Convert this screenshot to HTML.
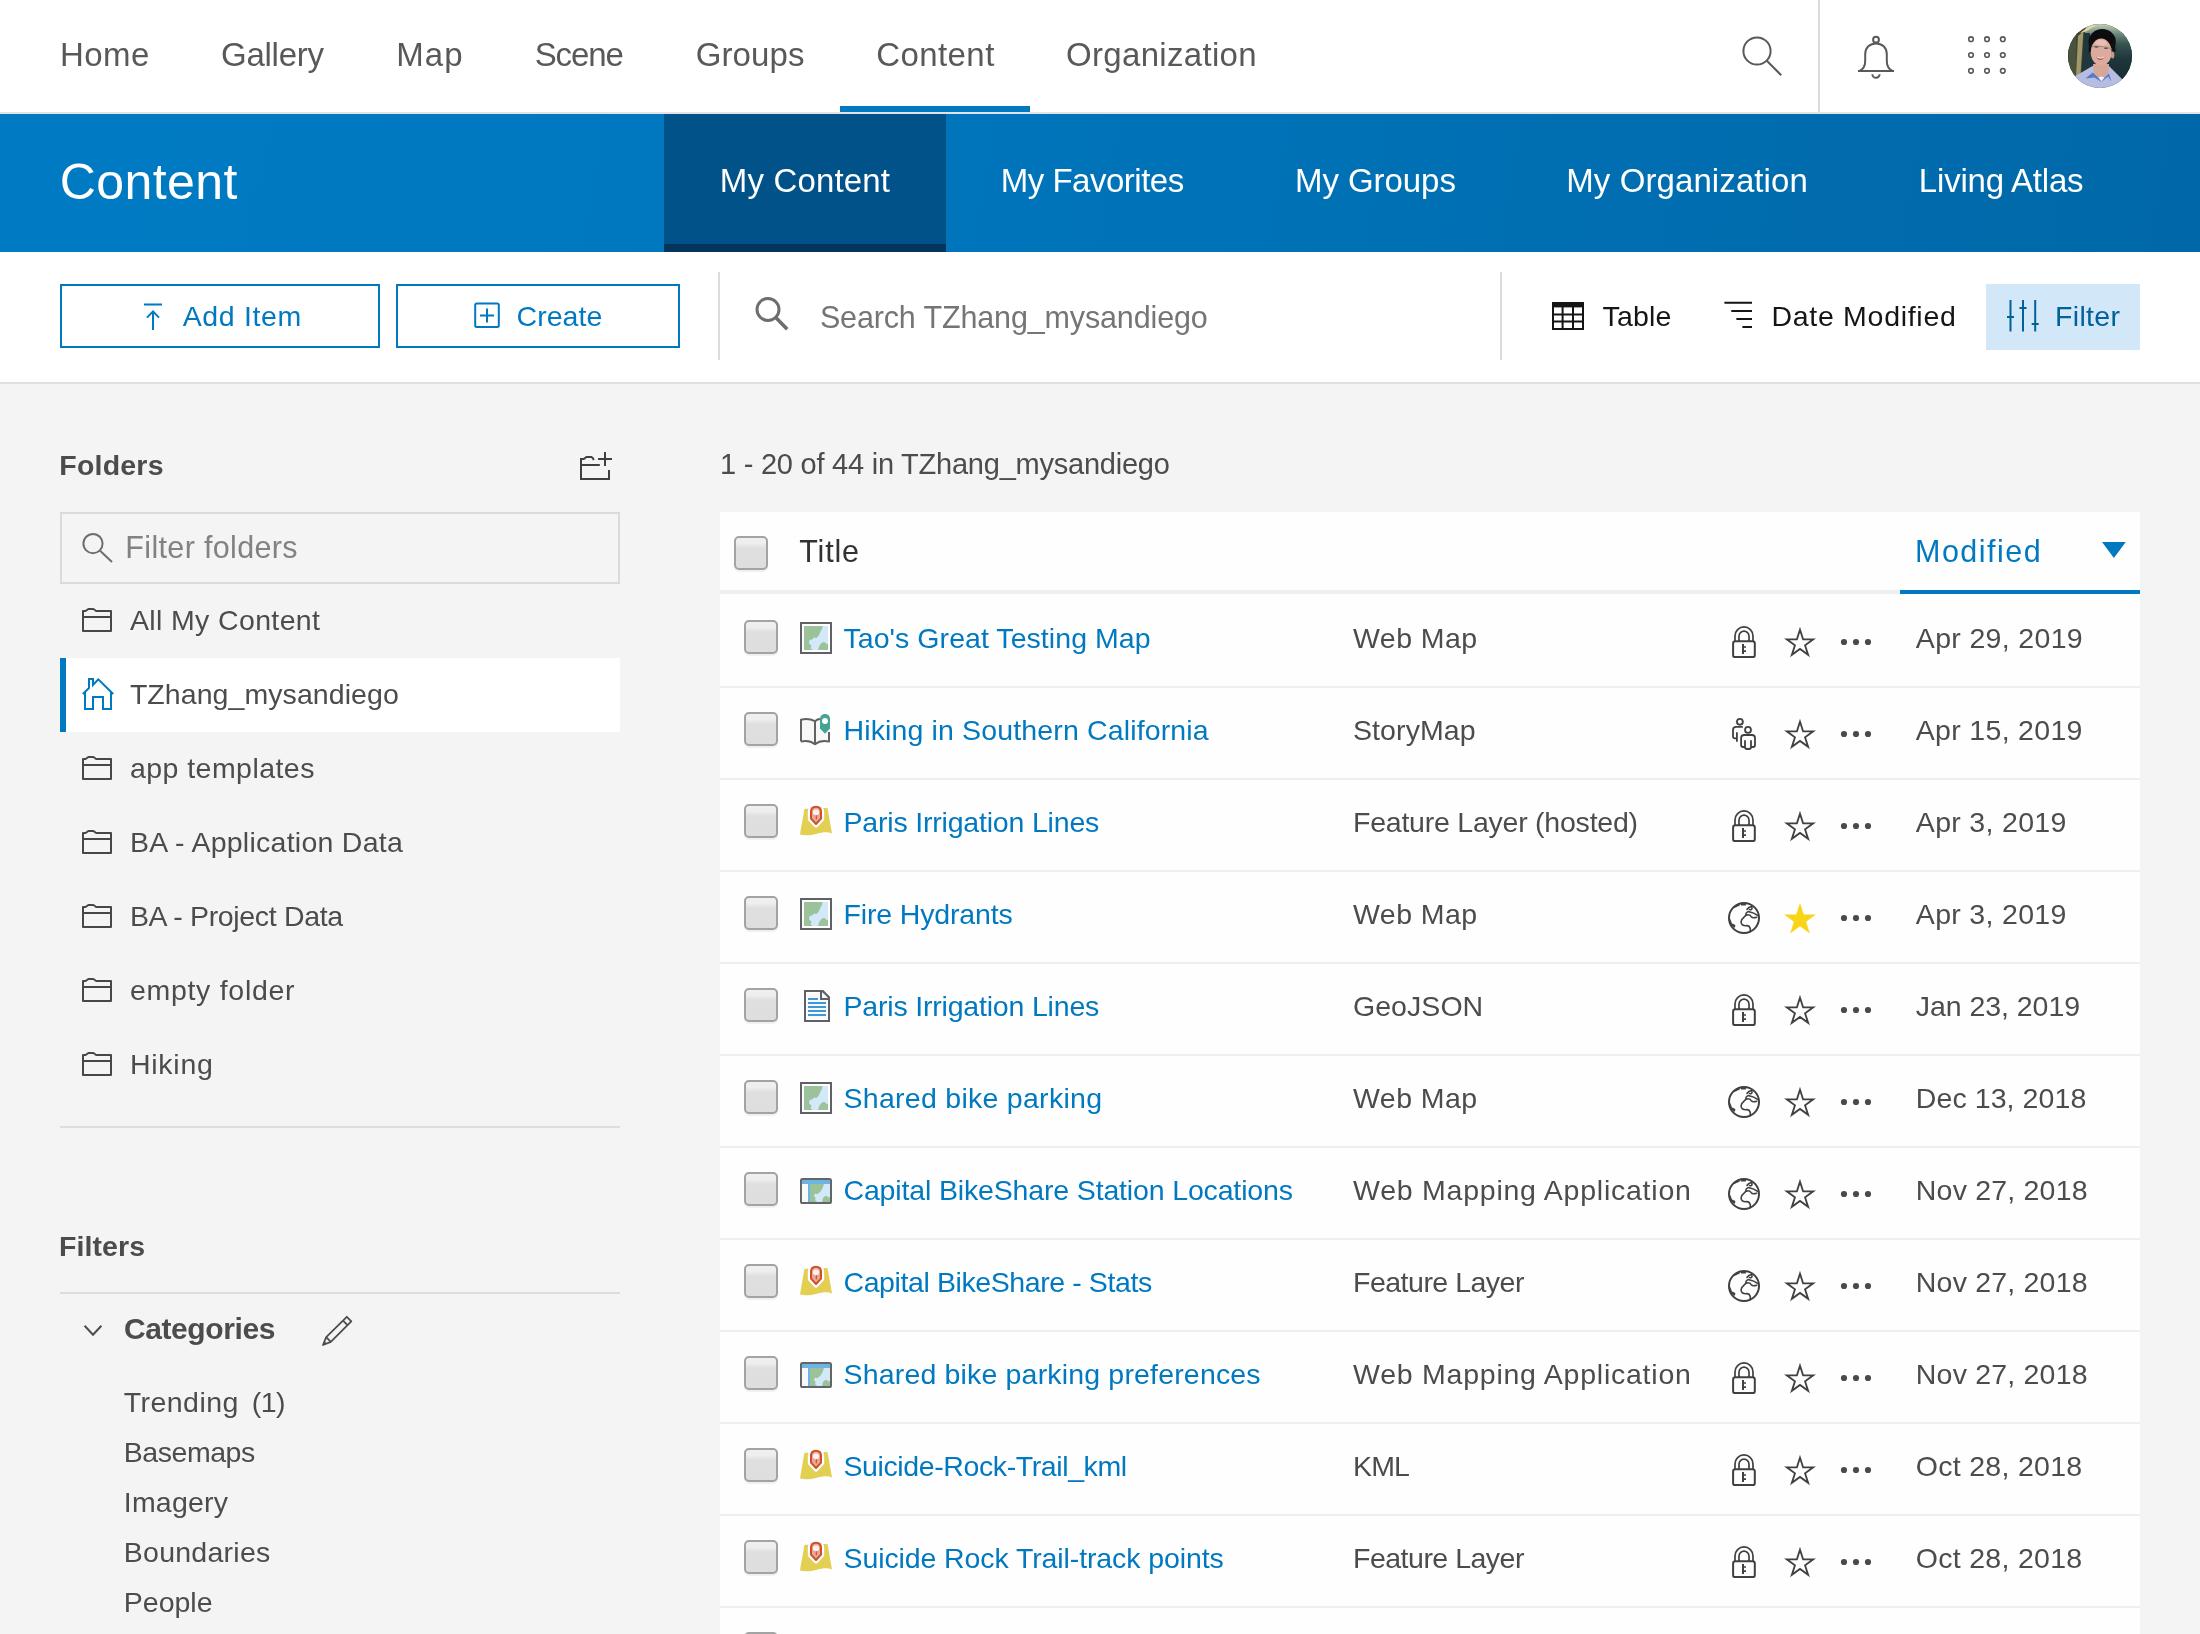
<!DOCTYPE html>
<html><head><meta charset="utf-8"><title>Content</title>
<style>
html,body{margin:0;padding:0}
html{width:2200px;height:1634px;overflow:hidden}
body{width:2200px;height:1634px;position:relative;overflow:hidden;background:#f4f4f4;font-family:"Liberation Sans",sans-serif}
.t{position:absolute;line-height:1;white-space:pre;font-family:"Liberation Sans",sans-serif}
.pg{position:absolute;left:0;top:0;width:2200px;height:1634px;overflow:hidden}
.a{position:absolute}
.tx{position:absolute;left:0;top:0;width:2200px;height:1634px;will-change:transform}
svg{position:absolute;overflow:visible}
.cb{position:absolute;width:30px;height:30px;border:2px solid #a3a3a3;border-radius:5px;background:linear-gradient(#f0f0f0 0,#eeeeee 18%,#dfdfdf 34%,#dedede 100%);box-shadow:0 2px 1px rgba(0,0,0,.06)}
</style></head>
<body>
<div class="pg">
<div class="a" style="left:0;top:0;width:2200px;height:112px;background:#fff"></div>
<div class="a" style="left:0;top:112px;width:2200px;height:2px;background:#e3e3e3"></div>
<div class="a" style="left:840px;top:106px;width:190px;height:6px;background:#0079c1"></div>
<div class="a" style="left:1818px;top:0;width:2px;height:112px;background:#dcdcdc"></div>
<div class="a" style="left:0;top:114px;width:2200px;height:138px;background:linear-gradient(100deg,#007ac2 0%,#0079c1 25%,#0068a8 100%)"></div>
<div class="a" style="left:664px;top:114px;width:282px;height:130px;background:#02528a"></div>
<div class="a" style="left:664px;top:244px;width:282px;height:8px;background:#03355c"></div>
<div class="a" style="left:0;top:252px;width:2200px;height:130px;background:#fff"></div>
<div class="a" style="left:0;top:382px;width:2200px;height:2px;background:#e0e0e0"></div>
<div class="a" style="left:60px;top:284px;width:316px;height:60px;border:2px solid #0079c1;background:#fff"></div>
<div class="a" style="left:396px;top:284px;width:280px;height:60px;border:2px solid #0079c1;background:#fff"></div>
<div class="a" style="left:718px;top:272px;width:2px;height:88px;background:#dcdcdc"></div>
<div class="a" style="left:1500px;top:272px;width:2px;height:88px;background:#dcdcdc"></div>
<div class="a" style="left:1986px;top:284px;width:154px;height:66px;background:#d2e7f8"></div>
<div class="a" style="left:60px;top:512px;width:556px;height:68px;border:2px solid #dadada;background:#f4f4f4"></div>
<div class="a" style="left:60px;top:658px;width:560px;height:74px;background:#fff"></div>
<div class="a" style="left:60px;top:658px;width:6px;height:74px;background:#0079c1"></div>
<div class="a" style="left:60px;top:1126px;width:560px;height:2px;background:#dddddd"></div>
<div class="a" style="left:60px;top:1292px;width:560px;height:2px;background:#dddddd"></div>
<div class="a" style="left:720px;top:512px;width:1420px;height:1122px;background:#fefefe"></div>
<div class="a" style="left:720px;top:590px;width:1420px;height:4px;background:#efefef"></div>
<div class="a" style="left:1900px;top:590px;width:240px;height:4px;background:#0079c1"></div>
<div class="a" style="left:720px;top:686px;width:1420px;height:2px;background:#efefef"></div>
<div class="a" style="left:720px;top:778px;width:1420px;height:2px;background:#efefef"></div>
<div class="a" style="left:720px;top:870px;width:1420px;height:2px;background:#efefef"></div>
<div class="a" style="left:720px;top:962px;width:1420px;height:2px;background:#efefef"></div>
<div class="a" style="left:720px;top:1054px;width:1420px;height:2px;background:#efefef"></div>
<div class="a" style="left:720px;top:1146px;width:1420px;height:2px;background:#efefef"></div>
<div class="a" style="left:720px;top:1238px;width:1420px;height:2px;background:#efefef"></div>
<div class="a" style="left:720px;top:1330px;width:1420px;height:2px;background:#efefef"></div>
<div class="a" style="left:720px;top:1422px;width:1420px;height:2px;background:#efefef"></div>
<div class="a" style="left:720px;top:1514px;width:1420px;height:2px;background:#efefef"></div>
<div class="a" style="left:720px;top:1606px;width:1420px;height:2px;background:#efefef"></div>
<div class="cb" style="left:734px;top:536px"></div>
<div class="cb" style="left:744px;top:620px"></div>
<div class="cb" style="left:744px;top:712px"></div>
<div class="cb" style="left:744px;top:804px"></div>
<div class="cb" style="left:744px;top:896px"></div>
<div class="cb" style="left:744px;top:988px"></div>
<div class="cb" style="left:744px;top:1080px"></div>
<div class="cb" style="left:744px;top:1172px"></div>
<div class="cb" style="left:744px;top:1264px"></div>
<div class="cb" style="left:744px;top:1356px"></div>
<div class="cb" style="left:744px;top:1448px"></div>
<div class="cb" style="left:744px;top:1540px"></div>
<div class="cb" style="left:744px;top:1632px"></div>
<svg class="a" style="left:0;top:0" width="2200" height="1634" viewBox="0 0 2200 1634">
<defs>
</defs>
<g fill="none" stroke="#595959" stroke-width="2"><circle cx="1757" cy="51" r="13.6"/><path d="M1766.8,60.8L1781.2,75.2"/></g>
<g fill="none" stroke="#595959" stroke-width="2"><circle cx="1876" cy="39.7" r="2.9"/><path d="M1859.5,71C1863.5,69 1865.2,66 1865.2,61V54C1865.2,47.6 1870,43.4 1876,43.4 1882,43.4 1886.8,47.6 1886.8,54V61C1886.8,66 1888.5,69 1892.5,71"/><path d="M1858,71H1894"/><path d="M1872.4,74.2A3.6,3.6 0 0 0 1879.6,74.2"/></g>
<g fill="none" stroke="#595959" stroke-width="1.6"><circle cx="1971" cy="39.2" r="2.3"/><circle cx="1987" cy="39.2" r="2.3"/><circle cx="2002.8" cy="39.2" r="2.3"/><circle cx="1971" cy="55" r="2.3"/><circle cx="1987" cy="55" r="2.3"/><circle cx="2002.8" cy="55" r="2.3"/><circle cx="1971" cy="70.8" r="2.3"/><circle cx="1987" cy="70.8" r="2.3"/><circle cx="2002.8" cy="70.8" r="2.3"/></g>
<g fill="none" stroke="#0079c1" stroke-width="2"><path d="M144,304.5H162M153,311.6V330M147,317.6L153,311.4 159,317.6"/><rect x="475.2" y="303.4" width="23.6" height="23.6" rx="1.5"/><path d="M487,308.4V322.4M480,315.4H494"/></g>
<g fill="none" stroke="#6e6e6e"><circle cx="768" cy="309.5" r="11" stroke-width="3"/><path d="M775.8,317.6L787.2,329.2" stroke-width="3.6"/></g>
<g fill="none" stroke="#151515" stroke-width="2"><rect x="1553" y="303" width="30" height="26"/><path d="M1553,314.5H1583M1553,321.6H1583M1562.6,307V329M1573,307V329"/></g><rect x="1552" y="302" width="32" height="5.4" fill="#151515"/>
<path d="M1724.4,302.8H1752M1731.3,311H1752M1736.4,319H1752M1742.4,327H1752" fill="none" stroke="#151515" stroke-width="2"/>
<path d="M2010.5,300V331.6M2023,300V331.6M2035.2,300V331.6M2007,317H2014M2019.5,308H2026.5M2031.7,324H2038.7" fill="none" stroke="#00619b" stroke-width="2"/>
<path d="M593.6,460.2Q593.4,457.6 591.4,457H586.4L583.8,459H581V479H609V470M581,465H599.8M605,452V466M598,459H612" fill="none" stroke="#404040" stroke-width="2"/>
<g fill="none" stroke="#6e6e6e" stroke-width="2"><circle cx="93" cy="543.6" r="9.6"/><path d="M99.8,550.6L112,562"/></g>
<g transform="translate(82,608)"><path d="M1,3H3.6L6.4,1H11.4L14.2,3H29V23H1ZM1,9H29" fill="none" stroke="#474747" stroke-width="2" stroke-linejoin="round"/></g>
<g transform="translate(82,756)"><path d="M1,3H3.6L6.4,1H11.4L14.2,3H29V23H1ZM1,9H29" fill="none" stroke="#474747" stroke-width="2" stroke-linejoin="round"/></g>
<g transform="translate(82,830)"><path d="M1,3H3.6L6.4,1H11.4L14.2,3H29V23H1ZM1,9H29" fill="none" stroke="#474747" stroke-width="2" stroke-linejoin="round"/></g>
<g transform="translate(82,904)"><path d="M1,3H3.6L6.4,1H11.4L14.2,3H29V23H1ZM1,9H29" fill="none" stroke="#474747" stroke-width="2" stroke-linejoin="round"/></g>
<g transform="translate(82,978)"><path d="M1,3H3.6L6.4,1H11.4L14.2,3H29V23H1ZM1,9H29" fill="none" stroke="#474747" stroke-width="2" stroke-linejoin="round"/></g>
<g transform="translate(82,1052)"><path d="M1,3H3.6L6.4,1H11.4L14.2,3H29V23H1ZM1,9H29" fill="none" stroke="#474747" stroke-width="2" stroke-linejoin="round"/></g>
<path d="M85,692.5V709H93V697H103V709H111V692.5M82.8,694L89,688V679H93V685L98.3,679.4 113.2,694" fill="none" stroke="#0079c1" stroke-width="2"/>
<path d="M84.6,1325.8L93,1334.8 101.4,1325.8" fill="none" stroke="#4c4c4c" stroke-width="2"/>
<g fill="none" stroke="#4c4c4c" stroke-width="1.8" stroke-linejoin="round"><path d="M326.2,1337.2L346.8,1316.8 351.3,1321.3 330.8,1341.8 323,1345ZM343,1320.6L347.5,1325.1M326.2,1337.2L330.8,1341.8"/></g><path d="M323,1345L324.6,1341.2 326.8,1343.4Z" fill="#4c4c4c"/>
<path d="M2102,542H2125.8L2113.9,558Z" fill="#0079c1"/>
<g transform="translate(800,622)"><rect x="1" y="1" width="30" height="30" fill="#fff" stroke="#5f6166" stroke-width="2"/><rect x="4" y="4" width="24" height="24" fill="#9bc29a"/><path d="M22.5,4H28V21.5L26.5,22 24.5,20 22,20.5 19.5,23.5 18,28H13L10.5,26.5 11.5,23.5 9,21.5 9.5,18 12,17.5 14,15.5 16.5,16 19,13 20.5,9.5 22,7Z" fill="#d3e8f8"/></g>
<g transform="translate(1732,626)"><g fill="none" stroke="#404040"><rect x="1.1" y="15.3" width="21.7" height="15.8" rx="2.2" stroke-width="2"/><path d="M3,15V9.9A9,9 0 0 1 21,9.9V15M7,15V10.2A5,5 0 0 1 17,10.2V15" stroke-width="1.7"/><path d="M11,18V28" stroke-width="2"/><path d="M11,21H14M11,25.2H14" stroke-width="1.7"/></g></g>
<polygon points="1800.00,629.70 1803.12,639.30 1813.22,639.30 1805.05,645.24 1808.17,654.85 1800.00,648.91 1791.83,654.85 1794.95,645.24 1786.78,639.30 1796.88,639.30" fill="none" stroke="#404040" stroke-width="1.8"/>
<g fill="#4a4a4a"><circle cx="1844" cy="642" r="3.1"/><circle cx="1856" cy="642" r="3.1"/><circle cx="1868" cy="642" r="3.1"/></g>
<g transform="translate(800,714)"><path d="M1,5.8Q8,3.6 15,7.2Q18,4.5 22,5V12H29V27.6Q21,25.6 15,30.2Q9,25.6 1,27.6Z" fill="#f7f7f7"/><path d="M15,7.2V30M1,27.6V5.8Q8,3.6 15,7.2Q17.5,5 20,5M29,18V27.6Q21,25.6 15,30.2Q9,25.6 1,27.6" fill="none" stroke="#616161" stroke-width="2" stroke-linejoin="round"/><path d="M25,0C28,0 30,2.2 30,5V14.6L25,19.8 20,14.6V5C20,2.2 22,0 25,0Z" fill="#45a393"/><circle cx="25" cy="7" r="3" fill="#fff"/></g>
<g transform="translate(1732,718)"><g fill="none" stroke="#404040" stroke-width="1.8"><circle cx="7.9" cy="3.8" r="2.95"/><path d="M10.8,8.9H4.2A3.2,3.2 0 0 0 1,12.1V18.4A1.9,1.9 0 0 0 2.9,20.3H4.9M4.9,14.3V23.7"/><circle cx="16" cy="11.9" r="2.95"/><path d="M13,29H11.1A2,2 0 0 1 9.1,27V20A3,3 0 0 1 12.1,17H20A3,3 0 0 1 23,20V27A2,2 0 0 1 21,29H19M13,22.3V29A2,2 0 0 0 15,31H17A2,2 0 0 0 19,29V22.3"/></g></g>
<polygon points="1800.00,721.70 1803.12,731.30 1813.22,731.30 1805.05,737.24 1808.17,746.85 1800.00,740.91 1791.83,746.85 1794.95,737.24 1786.78,731.30 1796.88,731.30" fill="none" stroke="#404040" stroke-width="1.8"/>
<g fill="#4a4a4a"><circle cx="1844" cy="734" r="3.1"/><circle cx="1856" cy="734" r="3.1"/><circle cx="1868" cy="734" r="3.1"/></g>
<g transform="translate(800,805.8)"><path d="M4.4,3.2C8,2.4 12,3.4 16,3 20,2.6 24,1.8 27.6,2.4L32,27.6C28,25.8 22,26.6 16,28.2 10,29.8 4,30 0,28.4Z" fill="#e3cf52"/><path d="M16,0C19.5,0 22,2.5 22,6V13.2L16,19.6 10,13.2V6C10,2.5 12.5,0 16,0Z" fill="#fff" stroke="#fff" stroke-width="4.4" stroke-linejoin="round"/><path d="M16,1C19,1 21,3 21,6V12.8L16,18.2 11,12.8V6C11,3 13,1 16,1Z" fill="#eaa898" stroke="#cf4f27" stroke-width="2" stroke-linejoin="round"/><path d="M16.4,8V13.5" stroke="#cf5a35" stroke-width="1.4"/><circle cx="16" cy="6.4" r="3" fill="#fbf3f0"/></g>
<g transform="translate(1732,810)"><g fill="none" stroke="#404040"><rect x="1.1" y="15.3" width="21.7" height="15.8" rx="2.2" stroke-width="2"/><path d="M3,15V9.9A9,9 0 0 1 21,9.9V15M7,15V10.2A5,5 0 0 1 17,10.2V15" stroke-width="1.7"/><path d="M11,18V28" stroke-width="2"/><path d="M11,21H14M11,25.2H14" stroke-width="1.7"/></g></g>
<polygon points="1800.00,813.70 1803.12,823.30 1813.22,823.30 1805.05,829.24 1808.17,838.85 1800.00,832.91 1791.83,838.85 1794.95,829.24 1786.78,823.30 1796.88,823.30" fill="none" stroke="#404040" stroke-width="1.8"/>
<g fill="#4a4a4a"><circle cx="1844" cy="826" r="3.1"/><circle cx="1856" cy="826" r="3.1"/><circle cx="1868" cy="826" r="3.1"/></g>
<g transform="translate(800,898)"><rect x="1" y="1" width="30" height="30" fill="#fff" stroke="#5f6166" stroke-width="2"/><rect x="4" y="4" width="24" height="24" fill="#9bc29a"/><path d="M22.5,4H28V21.5L26.5,22 24.5,20 22,20.5 19.5,23.5 18,28H13L10.5,26.5 11.5,23.5 9,21.5 9.5,18 12,17.5 14,15.5 16.5,16 19,13 20.5,9.5 22,7Z" fill="#d3e8f8"/></g>
<g transform="translate(1728,902)"><g fill="none" stroke="#404040"><circle cx="16" cy="16" r="15" stroke-width="2"/><path d="M20,9.6C18,10.6 17.4,12.4 18.2,13.2 16,14.6 15.4,16.4 13.9,17.2 13.4,18.6 12.6,20 13.4,21.6 14.4,23.4 16.4,24 18.6,23.6 20.8,23.6 22,25 22.4,27.2L22,29.6M20,9.6C22,10.4 24.6,10.4 26.6,11.6L30,13.6M18.4,13.2C20,12.4 22,13 23,14.4 24.2,16 25.6,16.2 28.6,15.2M19,7.4L21,5.4 23.4,4.4M21.6,7.6C23,8 24.4,7 24,5.6M6,5.2L11,3M13.4,2.8H17.4M1.6,17.6L3.4,22 6.4,24.8M4.4,22.6L6.6,23.4" stroke-width="1.6" stroke-linejoin="round" stroke-linecap="round"/></g></g>
<polygon points="1800.00,903.00 1803.77,914.61 1815.98,914.61 1806.10,921.78 1809.87,933.39 1800.00,926.22 1790.13,933.39 1793.90,921.78 1784.02,914.61 1796.23,914.61" fill="#f8d616"/>
<g fill="#4a4a4a"><circle cx="1844" cy="918" r="3.1"/><circle cx="1856" cy="918" r="3.1"/><circle cx="1868" cy="918" r="3.1"/></g>
<g transform="translate(804,990)"><path d="M1,1H18.6L25,7.4V31H1Z" fill="#fefefe" stroke="#5f6166" stroke-width="2" stroke-linejoin="miter"/><rect x="3.5" y="3.5" width="19" height="25" fill="#f8f8f8"/><path d="M17,1.5V9H24.5" fill="none" stroke="#5f6166" stroke-width="2"/><path d="M18.6,1L25,7.4" fill="none" stroke="#5f6166" stroke-width="2"/><g fill="#3f98d6"><rect x="4" y="8" width="10" height="2"/><rect x="4" y="12" width="18" height="2"/><rect x="4" y="16" width="18" height="2"/><rect x="4" y="20" width="18" height="2"/><rect x="4" y="24" width="18" height="2"/></g></g>
<g transform="translate(1732,994)"><g fill="none" stroke="#404040"><rect x="1.1" y="15.3" width="21.7" height="15.8" rx="2.2" stroke-width="2"/><path d="M3,15V9.9A9,9 0 0 1 21,9.9V15M7,15V10.2A5,5 0 0 1 17,10.2V15" stroke-width="1.7"/><path d="M11,18V28" stroke-width="2"/><path d="M11,21H14M11,25.2H14" stroke-width="1.7"/></g></g>
<polygon points="1800.00,997.70 1803.12,1007.30 1813.22,1007.30 1805.05,1013.24 1808.17,1022.85 1800.00,1016.91 1791.83,1022.85 1794.95,1013.24 1786.78,1007.30 1796.88,1007.30" fill="none" stroke="#404040" stroke-width="1.8"/>
<g fill="#4a4a4a"><circle cx="1844" cy="1010" r="3.1"/><circle cx="1856" cy="1010" r="3.1"/><circle cx="1868" cy="1010" r="3.1"/></g>
<g transform="translate(800,1082)"><rect x="1" y="1" width="30" height="30" fill="#fff" stroke="#5f6166" stroke-width="2"/><rect x="4" y="4" width="24" height="24" fill="#9bc29a"/><path d="M22.5,4H28V21.5L26.5,22 24.5,20 22,20.5 19.5,23.5 18,28H13L10.5,26.5 11.5,23.5 9,21.5 9.5,18 12,17.5 14,15.5 16.5,16 19,13 20.5,9.5 22,7Z" fill="#d3e8f8"/></g>
<g transform="translate(1728,1086)"><g fill="none" stroke="#404040"><circle cx="16" cy="16" r="15" stroke-width="2"/><path d="M20,9.6C18,10.6 17.4,12.4 18.2,13.2 16,14.6 15.4,16.4 13.9,17.2 13.4,18.6 12.6,20 13.4,21.6 14.4,23.4 16.4,24 18.6,23.6 20.8,23.6 22,25 22.4,27.2L22,29.6M20,9.6C22,10.4 24.6,10.4 26.6,11.6L30,13.6M18.4,13.2C20,12.4 22,13 23,14.4 24.2,16 25.6,16.2 28.6,15.2M19,7.4L21,5.4 23.4,4.4M21.6,7.6C23,8 24.4,7 24,5.6M6,5.2L11,3M13.4,2.8H17.4M1.6,17.6L3.4,22 6.4,24.8M4.4,22.6L6.6,23.4" stroke-width="1.6" stroke-linejoin="round" stroke-linecap="round"/></g></g>
<polygon points="1800.00,1089.70 1803.12,1099.30 1813.22,1099.30 1805.05,1105.24 1808.17,1114.85 1800.00,1108.91 1791.83,1114.85 1794.95,1105.24 1786.78,1099.30 1796.88,1099.30" fill="none" stroke="#404040" stroke-width="1.8"/>
<g fill="#4a4a4a"><circle cx="1844" cy="1102" r="3.1"/><circle cx="1856" cy="1102" r="3.1"/><circle cx="1868" cy="1102" r="3.1"/></g>
<g transform="translate(800,1178)"><rect x="1" y="1" width="30" height="24" rx="1.6" fill="#fff" stroke="#646567" stroke-width="2"/><rect x="2" y="2" width="28" height="4" fill="#6cb3e6"/><rect x="2" y="6" width="6" height="18" fill="#f9f9f9"/><rect x="8" y="6" width="2" height="18" fill="#6cb3e6"/><rect x="10" y="6" width="20" height="18" fill="#9cc29a"/><path d="M24,6H30V18.8L28.5,19.6 27,18 25,18 23,20 22,24H17L15,22 15.6,20 14,18 15,15.4 17,16.2 19,15 21,13 22.5,10Z" fill="#d3e9f8"/></g>
<g transform="translate(1728,1178)"><g fill="none" stroke="#404040"><circle cx="16" cy="16" r="15" stroke-width="2"/><path d="M20,9.6C18,10.6 17.4,12.4 18.2,13.2 16,14.6 15.4,16.4 13.9,17.2 13.4,18.6 12.6,20 13.4,21.6 14.4,23.4 16.4,24 18.6,23.6 20.8,23.6 22,25 22.4,27.2L22,29.6M20,9.6C22,10.4 24.6,10.4 26.6,11.6L30,13.6M18.4,13.2C20,12.4 22,13 23,14.4 24.2,16 25.6,16.2 28.6,15.2M19,7.4L21,5.4 23.4,4.4M21.6,7.6C23,8 24.4,7 24,5.6M6,5.2L11,3M13.4,2.8H17.4M1.6,17.6L3.4,22 6.4,24.8M4.4,22.6L6.6,23.4" stroke-width="1.6" stroke-linejoin="round" stroke-linecap="round"/></g></g>
<polygon points="1800.00,1181.70 1803.12,1191.30 1813.22,1191.30 1805.05,1197.24 1808.17,1206.85 1800.00,1200.91 1791.83,1206.85 1794.95,1197.24 1786.78,1191.30 1796.88,1191.30" fill="none" stroke="#404040" stroke-width="1.8"/>
<g fill="#4a4a4a"><circle cx="1844" cy="1194" r="3.1"/><circle cx="1856" cy="1194" r="3.1"/><circle cx="1868" cy="1194" r="3.1"/></g>
<g transform="translate(800,1265.8)"><path d="M4.4,3.2C8,2.4 12,3.4 16,3 20,2.6 24,1.8 27.6,2.4L32,27.6C28,25.8 22,26.6 16,28.2 10,29.8 4,30 0,28.4Z" fill="#e3cf52"/><path d="M16,0C19.5,0 22,2.5 22,6V13.2L16,19.6 10,13.2V6C10,2.5 12.5,0 16,0Z" fill="#fff" stroke="#fff" stroke-width="4.4" stroke-linejoin="round"/><path d="M16,1C19,1 21,3 21,6V12.8L16,18.2 11,12.8V6C11,3 13,1 16,1Z" fill="#eaa898" stroke="#cf4f27" stroke-width="2" stroke-linejoin="round"/><path d="M16.4,8V13.5" stroke="#cf5a35" stroke-width="1.4"/><circle cx="16" cy="6.4" r="3" fill="#fbf3f0"/></g>
<g transform="translate(1728,1270)"><g fill="none" stroke="#404040"><circle cx="16" cy="16" r="15" stroke-width="2"/><path d="M20,9.6C18,10.6 17.4,12.4 18.2,13.2 16,14.6 15.4,16.4 13.9,17.2 13.4,18.6 12.6,20 13.4,21.6 14.4,23.4 16.4,24 18.6,23.6 20.8,23.6 22,25 22.4,27.2L22,29.6M20,9.6C22,10.4 24.6,10.4 26.6,11.6L30,13.6M18.4,13.2C20,12.4 22,13 23,14.4 24.2,16 25.6,16.2 28.6,15.2M19,7.4L21,5.4 23.4,4.4M21.6,7.6C23,8 24.4,7 24,5.6M6,5.2L11,3M13.4,2.8H17.4M1.6,17.6L3.4,22 6.4,24.8M4.4,22.6L6.6,23.4" stroke-width="1.6" stroke-linejoin="round" stroke-linecap="round"/></g></g>
<polygon points="1800.00,1273.70 1803.12,1283.30 1813.22,1283.30 1805.05,1289.24 1808.17,1298.85 1800.00,1292.91 1791.83,1298.85 1794.95,1289.24 1786.78,1283.30 1796.88,1283.30" fill="none" stroke="#404040" stroke-width="1.8"/>
<g fill="#4a4a4a"><circle cx="1844" cy="1286" r="3.1"/><circle cx="1856" cy="1286" r="3.1"/><circle cx="1868" cy="1286" r="3.1"/></g>
<g transform="translate(800,1362)"><rect x="1" y="1" width="30" height="24" rx="1.6" fill="#fff" stroke="#646567" stroke-width="2"/><rect x="2" y="2" width="28" height="4" fill="#6cb3e6"/><rect x="2" y="6" width="6" height="18" fill="#f9f9f9"/><rect x="8" y="6" width="2" height="18" fill="#6cb3e6"/><rect x="10" y="6" width="20" height="18" fill="#9cc29a"/><path d="M24,6H30V18.8L28.5,19.6 27,18 25,18 23,20 22,24H17L15,22 15.6,20 14,18 15,15.4 17,16.2 19,15 21,13 22.5,10Z" fill="#d3e9f8"/></g>
<g transform="translate(1732,1362)"><g fill="none" stroke="#404040"><rect x="1.1" y="15.3" width="21.7" height="15.8" rx="2.2" stroke-width="2"/><path d="M3,15V9.9A9,9 0 0 1 21,9.9V15M7,15V10.2A5,5 0 0 1 17,10.2V15" stroke-width="1.7"/><path d="M11,18V28" stroke-width="2"/><path d="M11,21H14M11,25.2H14" stroke-width="1.7"/></g></g>
<polygon points="1800.00,1365.70 1803.12,1375.30 1813.22,1375.30 1805.05,1381.24 1808.17,1390.85 1800.00,1384.91 1791.83,1390.85 1794.95,1381.24 1786.78,1375.30 1796.88,1375.30" fill="none" stroke="#404040" stroke-width="1.8"/>
<g fill="#4a4a4a"><circle cx="1844" cy="1378" r="3.1"/><circle cx="1856" cy="1378" r="3.1"/><circle cx="1868" cy="1378" r="3.1"/></g>
<g transform="translate(800,1449.8)"><path d="M4.4,3.2C8,2.4 12,3.4 16,3 20,2.6 24,1.8 27.6,2.4L32,27.6C28,25.8 22,26.6 16,28.2 10,29.8 4,30 0,28.4Z" fill="#e3cf52"/><path d="M16,0C19.5,0 22,2.5 22,6V13.2L16,19.6 10,13.2V6C10,2.5 12.5,0 16,0Z" fill="#fff" stroke="#fff" stroke-width="4.4" stroke-linejoin="round"/><path d="M16,1C19,1 21,3 21,6V12.8L16,18.2 11,12.8V6C11,3 13,1 16,1Z" fill="#eaa898" stroke="#cf4f27" stroke-width="2" stroke-linejoin="round"/><path d="M16.4,8V13.5" stroke="#cf5a35" stroke-width="1.4"/><circle cx="16" cy="6.4" r="3" fill="#fbf3f0"/></g>
<g transform="translate(1732,1454)"><g fill="none" stroke="#404040"><rect x="1.1" y="15.3" width="21.7" height="15.8" rx="2.2" stroke-width="2"/><path d="M3,15V9.9A9,9 0 0 1 21,9.9V15M7,15V10.2A5,5 0 0 1 17,10.2V15" stroke-width="1.7"/><path d="M11,18V28" stroke-width="2"/><path d="M11,21H14M11,25.2H14" stroke-width="1.7"/></g></g>
<polygon points="1800.00,1457.70 1803.12,1467.30 1813.22,1467.30 1805.05,1473.24 1808.17,1482.85 1800.00,1476.91 1791.83,1482.85 1794.95,1473.24 1786.78,1467.30 1796.88,1467.30" fill="none" stroke="#404040" stroke-width="1.8"/>
<g fill="#4a4a4a"><circle cx="1844" cy="1470" r="3.1"/><circle cx="1856" cy="1470" r="3.1"/><circle cx="1868" cy="1470" r="3.1"/></g>
<g transform="translate(800,1541.8)"><path d="M4.4,3.2C8,2.4 12,3.4 16,3 20,2.6 24,1.8 27.6,2.4L32,27.6C28,25.8 22,26.6 16,28.2 10,29.8 4,30 0,28.4Z" fill="#e3cf52"/><path d="M16,0C19.5,0 22,2.5 22,6V13.2L16,19.6 10,13.2V6C10,2.5 12.5,0 16,0Z" fill="#fff" stroke="#fff" stroke-width="4.4" stroke-linejoin="round"/><path d="M16,1C19,1 21,3 21,6V12.8L16,18.2 11,12.8V6C11,3 13,1 16,1Z" fill="#eaa898" stroke="#cf4f27" stroke-width="2" stroke-linejoin="round"/><path d="M16.4,8V13.5" stroke="#cf5a35" stroke-width="1.4"/><circle cx="16" cy="6.4" r="3" fill="#fbf3f0"/></g>
<g transform="translate(1732,1546)"><g fill="none" stroke="#404040"><rect x="1.1" y="15.3" width="21.7" height="15.8" rx="2.2" stroke-width="2"/><path d="M3,15V9.9A9,9 0 0 1 21,9.9V15M7,15V10.2A5,5 0 0 1 17,10.2V15" stroke-width="1.7"/><path d="M11,18V28" stroke-width="2"/><path d="M11,21H14M11,25.2H14" stroke-width="1.7"/></g></g>
<polygon points="1800.00,1549.70 1803.12,1559.30 1813.22,1559.30 1805.05,1565.24 1808.17,1574.85 1800.00,1568.91 1791.83,1574.85 1794.95,1565.24 1786.78,1559.30 1796.88,1559.30" fill="none" stroke="#404040" stroke-width="1.8"/>
<g fill="#4a4a4a"><circle cx="1844" cy="1562" r="3.1"/><circle cx="1856" cy="1562" r="3.1"/><circle cx="1868" cy="1562" r="3.1"/></g>
</svg>
<div class="a" style="left:2068px;top:24px;width:64px;height:64px;border-radius:50%;overflow:hidden;background:#1d3338"><svg style="left:-4px;top:-4px;filter:blur(0.5px)" width="72" height="72" viewBox="-4 -4 72 72"><defs><linearGradient id="avbg" x1="0" y1="0" x2="0" y2="1"><stop offset="0.04" stop-color="#ccd5c1"/><stop offset="0.11" stop-color="#a3b39f"/><stop offset="0.2" stop-color="#6a8678"/><stop offset="0.34" stop-color="#35524e"/><stop offset="0.55" stop-color="#1e353b"/><stop offset="1" stop-color="#13262f"/></linearGradient></defs><g>
<rect x="-4" y="-4" width="72" height="72" fill="url(#avbg)"/>
<path d="M-4,-4H19L17,8 13,60H-4Z" fill="#3d4632"/>
<path d="M1,12H8V58H1Z" fill="#4a513d"/>
<path d="M10,12L15.4,7.6 12.2,56H7.8Z" fill="#a0976a"/>
<path d="M12,9L22,1.5 30,0.5 18,7.5Z" fill="#ddd5a8"/>
<path d="M16,9H22V50H13.4Z" fill="#20383b"/>
<path d="M-2,57L10,50.5 24.5,42 41,42 53.5,54.5 66,60V68H-2Z" fill="#b5bee2"/>
<path d="M25,40H41L40.4,49.5 33.4,55 26,50Z" fill="#d8a697"/>
<path d="M17.5,54.6L24.6,48.6 30.4,53.6 33.4,58 26.5,53.6Z" fill="#5d78c6"/>
<path d="M33.4,58L36.4,53.6 41,49.6 43.4,57.4 40,52.6Z" fill="#5d78c6"/>
<path d="M30.4,53.6L33.4,52.6 36.4,53.6 33.4,57Z" fill="#f3f3f3"/>
<ellipse cx="34.2" cy="17.4" rx="13.6" ry="12.4" fill="#0d0d0f"/>
<path d="M20.8,16L20.6,28.8 23.4,27.4 24.4,17Z" fill="#111113"/>
<path d="M47,17L47.6,27.4 44.6,28.8 43.6,18Z" fill="#111113"/>
<ellipse cx="33.2" cy="28.2" rx="10.4" ry="13.6" fill="#ddab9d"/>
<ellipse cx="44.6" cy="31" rx="1.7" ry="3.4" fill="#c99688"/>
<path d="M22.6,17C27,12.4 35,12 44.6,18 42,9.6 27,8 22.6,17Z" fill="#0d0d0f"/>
<ellipse cx="33" cy="19" rx="6" ry="3.2" fill="#e8bfb2"/>
<path d="M24,22.6C28,21.8 33,22.2 36,22.8 38,23.2 41.4,23.8 43.6,24.8" stroke="#9f8f8b" stroke-width="1.1" fill="none"/>
<ellipse cx="28.4" cy="23" rx="2.2" ry="0.8" fill="#6b4a44"/><ellipse cx="38" cy="24.2" rx="2.2" ry="0.8" fill="#6b4a44"/>
<path d="M28,32.4C31,35 35,34.8 36.6,33 34.2,37.2 30,36.8 28,32.4Z" fill="#b4505e"/>
<path d="M29,33C31,34.4 34,34.2 35.8,33.2" stroke="#efe3e0" stroke-width="1" fill="none"/>
</g></svg></div>
<div class="tx">
<span class="t" style="left:60.00px;top:38.37px;font-size:33px;color:#595959;letter-spacing:0.417px">Home</span>
<span class="t" style="left:221.00px;top:38.37px;font-size:33px;color:#595959;letter-spacing:-0.250px">Gallery</span>
<span class="t" style="left:396.25px;top:38.37px;font-size:33px;color:#595959;letter-spacing:1.125px">Map</span>
<span class="t" style="left:534.70px;top:38.37px;font-size:33px;color:#595959;letter-spacing:-1.100px">Scene</span>
<span class="t" style="left:695.65px;top:38.37px;font-size:33px;color:#595959;letter-spacing:0.150px">Groups</span>
<span class="t" style="left:876.15px;top:38.37px;font-size:33px;color:#595959;letter-spacing:0.433px">Content</span>
<span class="t" style="left:1066.10px;top:38.37px;font-size:33px;color:#595959;letter-spacing:0.309px">Organization</span>
<span class="t" style="left:59.70px;top:156.68px;font-size:50px;color:#ffffff;letter-spacing:0.425px">Content</span>
<span class="t" style="left:719.75px;top:164.17px;font-size:33px;color:#ffffff;letter-spacing:0.161px">My Content</span>
<span class="t" style="left:1000.75px;top:164.17px;font-size:33px;color:#ffffff;letter-spacing:-0.491px">My Favorites</span>
<span class="t" style="left:1294.95px;top:164.17px;font-size:33px;color:#ffffff;letter-spacing:-0.050px">My Groups</span>
<span class="t" style="left:1566.25px;top:164.17px;font-size:33px;color:#ffffff;letter-spacing:0.093px">My Organization</span>
<span class="t" style="left:1918.85px;top:164.17px;font-size:33px;color:#ffffff;letter-spacing:-0.200px">Living Atlas</span>
<span class="t" style="left:182.70px;top:301.67px;font-size:28.5px;color:#0079c1;letter-spacing:0.650px">Add Item</span>
<span class="t" style="left:516.50px;top:301.67px;font-size:28.5px;color:#0079c1;letter-spacing:0.050px">Create</span>
<span class="t" style="left:819.90px;top:301.88px;font-size:30.5px;color:#757575;letter-spacing:-0.141px">Search TZhang_mysandiego</span>
<span class="t" style="left:1602.45px;top:301.57px;font-size:28.5px;color:#151515;letter-spacing:0.212px">Table</span>
<span class="t" style="left:1771.45px;top:301.57px;font-size:28.5px;color:#151515;letter-spacing:0.712px">Date Modified</span>
<span class="t" style="left:2055.05px;top:301.57px;font-size:28.5px;color:#00619b;letter-spacing:0.320px">Filter</span>
<span class="t" style="left:59.30px;top:451.47px;font-size:28.5px;color:#4c4c4c;letter-spacing:0.208px;font-weight:700">Folders</span>
<span class="t" style="left:125.30px;top:531.98px;font-size:30.5px;color:#828282;letter-spacing:0.342px">Filter folders</span>
<span class="t" style="left:129.90px;top:605.67px;font-size:28.5px;color:#4c4c4c;letter-spacing:0.369px">All My Content</span>
<span class="t" style="left:129.90px;top:679.67px;font-size:28.5px;color:#4c4c4c;letter-spacing:0.069px">TZhang_mysandiego</span>
<span class="t" style="left:129.90px;top:753.67px;font-size:28.5px;color:#4c4c4c;letter-spacing:0.458px">app templates</span>
<span class="t" style="left:129.90px;top:827.67px;font-size:28.5px;color:#4c4c4c;letter-spacing:0.257px">BA - Application Data</span>
<span class="t" style="left:129.90px;top:901.67px;font-size:28.5px;color:#4c4c4c;letter-spacing:-0.338px">BA - Project Data</span>
<span class="t" style="left:129.90px;top:975.67px;font-size:28.5px;color:#4c4c4c;letter-spacing:0.714px">empty folder</span>
<span class="t" style="left:129.90px;top:1049.67px;font-size:28.5px;color:#4c4c4c;letter-spacing:0.770px">Hiking</span>
<span class="t" style="left:59.00px;top:1232.07px;font-size:28.5px;color:#4c4c4c;letter-spacing:0.092px;font-weight:700">Filters</span>
<span class="t" style="left:123.95px;top:1314.40px;font-size:30px;color:#4c4c4c;letter-spacing:-0.400px;font-weight:700">Categories</span>
<span class="t" style="left:123.80px;top:1387.67px;font-size:28.5px;color:#4c4c4c;letter-spacing:0.443px">Trending</span>
<span class="t" style="left:251.85px;top:1387.67px;font-size:28.5px;color:#4c4c4c;letter-spacing:-0.625px">(1)</span>
<span class="t" style="left:123.80px;top:1437.67px;font-size:28.5px;color:#4c4c4c;letter-spacing:-0.457px">Basemaps</span>
<span class="t" style="left:123.80px;top:1487.87px;font-size:28.5px;color:#4c4c4c;letter-spacing:0.208px">Imagery</span>
<span class="t" style="left:123.80px;top:1537.67px;font-size:28.5px;color:#4c4c4c;letter-spacing:0.250px">Boundaries</span>
<span class="t" style="left:123.80px;top:1587.87px;font-size:28.5px;color:#4c4c4c;letter-spacing:0.000px">People</span>
<span class="t" style="left:719.95px;top:449.95px;font-size:29px;color:#4c4c4c;letter-spacing:-0.233px">1 - 20 of 44 in TZhang_mysandiego</span>
<span class="t" style="left:799.25px;top:535.68px;font-size:30.5px;color:#323232;letter-spacing:0.812px">Title</span>
<span class="t" style="left:1915.00px;top:535.93px;font-size:30.5px;color:#0079c1;letter-spacing:1.500px">Modified</span>
<span class="t" style="left:843.50px;top:623.57px;font-size:28.5px;color:#0079c1;letter-spacing:0.052px">Tao's Great Testing Map</span>
<span class="t" style="left:1353.00px;top:623.57px;font-size:28.5px;color:#4c4c4c;letter-spacing:0.458px">Web Map</span>
<span class="t" style="left:1915.80px;top:623.57px;font-size:28.5px;color:#4c4c4c;letter-spacing:0.336px">Apr 29, 2019</span>
<span class="t" style="left:843.50px;top:715.57px;font-size:28.5px;color:#0079c1;letter-spacing:0.141px">Hiking in Southern California</span>
<span class="t" style="left:1353.00px;top:715.57px;font-size:28.5px;color:#4c4c4c;letter-spacing:0.093px">StoryMap</span>
<span class="t" style="left:1915.80px;top:715.57px;font-size:28.5px;color:#4c4c4c;letter-spacing:0.314px">Apr 15, 2019</span>
<span class="t" style="left:843.50px;top:807.57px;font-size:28.5px;color:#0079c1;letter-spacing:-0.190px">Paris Irrigation Lines</span>
<span class="t" style="left:1353.00px;top:807.57px;font-size:28.5px;color:#4c4c4c;letter-spacing:-0.231px">Feature Layer (hosted)</span>
<span class="t" style="left:1915.80px;top:807.57px;font-size:28.5px;color:#4c4c4c;letter-spacing:0.320px">Apr 3, 2019</span>
<span class="t" style="left:843.50px;top:899.57px;font-size:28.5px;color:#0079c1;letter-spacing:-0.146px">Fire Hydrants</span>
<span class="t" style="left:1353.00px;top:899.57px;font-size:28.5px;color:#4c4c4c;letter-spacing:0.458px">Web Map</span>
<span class="t" style="left:1915.80px;top:899.57px;font-size:28.5px;color:#4c4c4c;letter-spacing:0.320px">Apr 3, 2019</span>
<span class="t" style="left:843.50px;top:991.57px;font-size:28.5px;color:#0079c1;letter-spacing:-0.190px">Paris Irrigation Lines</span>
<span class="t" style="left:1353.00px;top:991.57px;font-size:28.5px;color:#4c4c4c;letter-spacing:0.050px">GeoJSON</span>
<span class="t" style="left:1915.80px;top:991.57px;font-size:28.5px;color:#4c4c4c;letter-spacing:-0.050px">Jan 23, 2019</span>
<span class="t" style="left:843.50px;top:1083.57px;font-size:28.5px;color:#0079c1;letter-spacing:0.278px">Shared bike parking</span>
<span class="t" style="left:1353.00px;top:1083.57px;font-size:28.5px;color:#4c4c4c;letter-spacing:0.458px">Web Map</span>
<span class="t" style="left:1915.80px;top:1083.57px;font-size:28.5px;color:#4c4c4c;letter-spacing:0.086px">Dec 13, 2018</span>
<span class="t" style="left:843.50px;top:1175.57px;font-size:28.5px;color:#0079c1;letter-spacing:-0.154px">Capital BikeShare Station Locations</span>
<span class="t" style="left:1353.00px;top:1175.57px;font-size:28.5px;color:#4c4c4c;letter-spacing:0.761px">Web Mapping Application</span>
<span class="t" style="left:1915.80px;top:1175.57px;font-size:28.5px;color:#4c4c4c;letter-spacing:0.200px">Nov 27, 2018</span>
<span class="t" style="left:843.50px;top:1267.57px;font-size:28.5px;color:#0079c1;letter-spacing:-0.406px">Capital BikeShare - Stats</span>
<span class="t" style="left:1353.00px;top:1267.57px;font-size:28.5px;color:#4c4c4c;letter-spacing:-0.500px">Feature Layer</span>
<span class="t" style="left:1915.80px;top:1267.57px;font-size:28.5px;color:#4c4c4c;letter-spacing:0.200px">Nov 27, 2018</span>
<span class="t" style="left:843.50px;top:1359.57px;font-size:28.5px;color:#0079c1;letter-spacing:0.173px">Shared bike parking preferences</span>
<span class="t" style="left:1353.00px;top:1359.57px;font-size:28.5px;color:#4c4c4c;letter-spacing:0.761px">Web Mapping Application</span>
<span class="t" style="left:1915.80px;top:1359.57px;font-size:28.5px;color:#4c4c4c;letter-spacing:0.200px">Nov 27, 2018</span>
<span class="t" style="left:843.50px;top:1451.57px;font-size:28.5px;color:#0079c1;letter-spacing:-0.395px">Suicide-Rock-Trail_kml</span>
<span class="t" style="left:1353.00px;top:1451.57px;font-size:28.5px;color:#4c4c4c;letter-spacing:-0.875px">KML</span>
<span class="t" style="left:1915.80px;top:1451.57px;font-size:28.5px;color:#4c4c4c;letter-spacing:0.291px">Oct 28, 2018</span>
<span class="t" style="left:843.50px;top:1543.57px;font-size:28.5px;color:#0079c1;letter-spacing:-0.102px">Suicide Rock Trail-track points</span>
<span class="t" style="left:1353.00px;top:1543.57px;font-size:28.5px;color:#4c4c4c;letter-spacing:-0.500px">Feature Layer</span>
<span class="t" style="left:1915.80px;top:1543.57px;font-size:28.5px;color:#4c4c4c;letter-spacing:0.291px">Oct 28, 2018</span>
</div>
</div>
</body></html>
